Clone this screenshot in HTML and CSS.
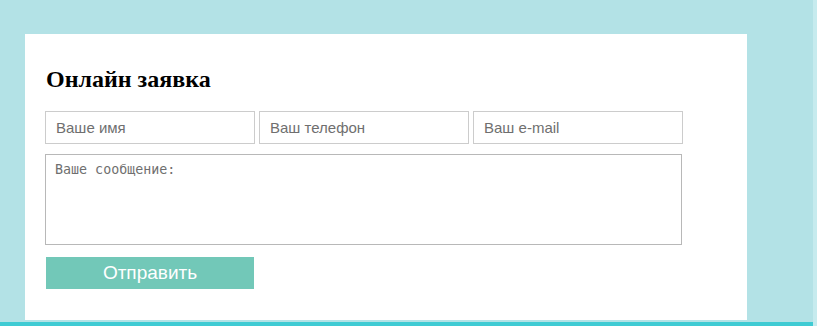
FILE: index.html
```html
<!DOCTYPE html>
<html lang="ru">
<head>
  <meta charset="UTF-8">
  <title>Онлайн заявка</title>
  <link rel="stylesheet" href="styles.css">
</head>
<body>

<div class="page">
  <div class="main">
    <div class="card">
      <h2>Онлайн заявка</h2>

      <form class="order-form" onsubmit="return false">
        <div class="form-row">
          <input type="text" placeholder="Ваше имя">
          <input type="text" placeholder="Ваш телефон">
          <input type="text" placeholder="Ваш e-mail">
        </div>
        <textarea placeholder="Ваше сообщение:"></textarea>
        <button type="submit" class="send-btn">Отправить</button>
      </form>
    </div>
    <div class="footer-line"></div>
  </div>
  <div class="edge"></div>
</div>

</body>
</html>
```

FILE: styles.css
```css
body {
  margin: 0;
  background: #b3e2e6;
  font-family: "Liberation Sans", Arial, sans-serif;
  overflow: hidden;
}

.page {
  display: flex;
  height: 326px;
}

.main {
  width: 813px;
  padding-top: 34px;
  display: flex;
  flex-direction: column;
}

.edge {
  width: 4px;
  background: #c6ebee;
}

.card {
  margin-left: 25px;
  width: 722px;
  height: 286px;
  box-sizing: border-box;
  padding: 31px 0 0 20px;
  background: #fff;
}

.card h2 {
  margin: 0 0 18px 1px;
  height: 28px;
  line-height: 28px;
  font-family: "Liberation Serif", "Times New Roman", serif;
  font-size: 24px;
  font-weight: bold;
  color: #000;
}

.form-row {
  display: flex;
  gap: 4px;
  margin-bottom: 10px;
}

.form-row input {
  width: 210px;
  height: 33px;
  box-sizing: border-box;
  padding: 0 10px;
  border: 1px solid #ccc;
  font-family: "Liberation Sans", Arial, sans-serif;
  font-size: 15px;
  outline: none;
}

.form-row input::placeholder {
  color: #6f6f6f;
}

textarea {
  display: block;
  width: 637px;
  height: 91px;
  box-sizing: border-box;
  padding: 7px 9px;
  border: 1px solid #b8b8b8;
  font-family: "DejaVu Sans Mono", monospace;
  font-size: 13.33px;
  resize: none;
  outline: none;
}

textarea::placeholder {
  color: #6f6f6f;
}

.send-btn {
  display: block;
  margin: 12px 0 0 1px;
  width: 208px;
  height: 32px;
  padding: 0;
  background: #72c8b8;
  color: #fff;
  border: none;
  font-family: "Liberation Sans", Arial, sans-serif;
  font-size: 19px;
  cursor: pointer;
}

.footer-line {
  margin-top: 2px;
  height: 4px;
  background: #3fcbd3;
}
```
